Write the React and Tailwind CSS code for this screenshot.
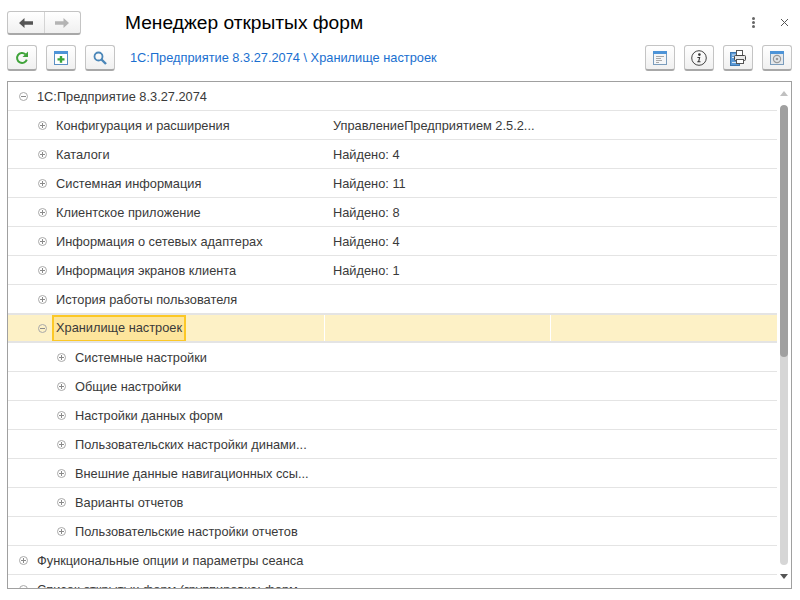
import React from 'react';

const rows = [
  { level: 0, name: '1С:Предприятие 8.3.27.2074', open: true },
  { level: 1, name: 'Конфигурация и расширения', value: 'УправлениеПредприятием 2.5.2...' },
  { level: 1, name: 'Каталоги', value: 'Найдено: 4' },
  { level: 1, name: 'Системная информация', value: 'Найдено: 11' },
  { level: 1, name: 'Клиентское приложение', value: 'Найдено: 8' },
  { level: 1, name: 'Информация о сетевых адаптерах', value: 'Найдено: 4' },
  { level: 1, name: 'Информация экранов клиента', value: 'Найдено: 1' },
  { level: 1, name: 'История работы пользователя' },
  { level: 1, name: 'Хранилище настроек', open: true, selected: true },
  { level: 2, name: 'Системные настройки' },
  { level: 2, name: 'Общие настройки' },
  { level: 2, name: 'Настройки данных форм' },
  { level: 2, name: 'Пользовательских настройки динами...' },
  { level: 2, name: 'Внешние данные навигационных ссы...' },
  { level: 2, name: 'Варианты отчетов' },
  { level: 2, name: 'Пользовательские настройки отчетов' },
  { level: 0, name: 'Функциональные опции и параметры сеанса' },
  { level: 0, name: 'Список открытых форм (группировка: форм', open: true },
];

const indent = ['pl-[11px]', 'pl-[30px]', 'pl-[49px]'];

const ToolButton = ({ children }) => (
  <button className="w-[30px] h-[26px] flex items-center justify-center rounded-[3px] border border-[#c4c4c4] border-b-2 border-b-[#a8a8a8] bg-gradient-to-b from-white to-[#f0f0f0]">
    {children}
  </button>
);

const TreeToggle = ({ open }) => (
  <svg width="9" height="9" viewBox="0 0 9 9" className="shrink-0 -mt-px">
    <circle cx="4.5" cy="4.5" r="4" fill="none" stroke="#a8a8a8" />
    <path d={open ? 'M2 4.5h5' : 'M2 4.5h5M4.5 2v5'} stroke="#8a8a8a" />
  </svg>
);

const Row = ({ row }) => (
  <div className={`flex h-[29px] shrink-0 border-b border-[#e4e4e4] text-[12.8px] text-[#3a3a3a] ${row.selected ? 'bg-[#fdf1c6] border-b-2 border-t-2 border-[#e2e2ea] h-[30px] -mt-px' : ''}`}>
    <div className={`w-[317px] shrink-0 flex items-center pt-px overflow-hidden whitespace-nowrap ${indent[row.level]} ${row.selected ? 'border-r border-white' : ''}`}>
      <TreeToggle open={row.open} />
      {row.selected ? (
        <span className="ml-[5px] h-[27px] w-[134px] -mt-px flex items-center pl-[2px] bg-[#fde59c] border-2 border-[#fcc826]">{row.name}</span>
      ) : (
        <span className="ml-[9px]">{row.name}</span>
      )}
    </div>
    <div className={`w-[226px] shrink-0 flex items-center pt-px pl-[8px] whitespace-nowrap ${row.selected ? 'border-r border-white' : ''}`}>{row.value}</div>
    <div className="flex-1" />
  </div>
);

export default function App() {
  return (
    <div className="w-[800px] h-[600px] bg-white flex flex-col overflow-hidden font-['Liberation_Sans',Arial,sans-serif]">
      {/* заголовок */}
      <div className="flex items-center h-[24px] mt-[11px] pl-[7px] pr-[11px] shrink-0">
        <div className="w-[74px] h-[24px] flex rounded-[3px] border border-[#c4c4c4] border-b-2 border-b-[#a8a8a8] bg-gradient-to-b from-white to-[#f0f0f0]">
          <div className="flex-1 flex items-center justify-center border-r border-[#d4d4d4]">
            <svg width="14" height="10" viewBox="0 0 14 10"><path d="M0 5 5.5 0v3.2H14v3.6H5.5V10z" fill="#555" /></svg>
          </div>
          <div className="flex-1 flex items-center justify-center">
            <svg width="14" height="10" viewBox="0 0 14 10"><path d="M14 5 8.5 0v3.2H0v3.6h8.5V10z" fill="#b4b4b4" /></svg>
          </div>
        </div>
        <div className="ml-[44px] text-[19.2px] text-black whitespace-nowrap">Менеджер открытых форм</div>
        <div className="ml-auto flex flex-col gap-[1px] mr-[25px] -mt-[2px]">
          <span className="w-[3px] h-[3px] bg-[#666] rounded-full" />
          <span className="w-[3px] h-[3px] bg-[#666] rounded-full" />
          <span className="w-[3px] h-[3px] bg-[#666] rounded-full" />
        </div>
        <svg width="9" height="9" viewBox="0 0 9 9" className="-mt-px"><path d="M1 1l7 7M8 1 1 8" stroke="#555" /></svg>
      </div>

      {/* панель кнопок */}
      <div className="flex items-center h-[26px] mt-[10px] pl-[7px] pr-[8px] shrink-0">
        <div className="flex gap-[9px]">
          <ToolButton>
            <svg width="14" height="14" viewBox="0 0 14 14" fill="none">
              <path d="M11.8 8.6A5 5 0 1 1 10.400 3.200" stroke="#3fa33a" strokeWidth="2" />
              <path d="M13 0.500v5.500H7.500z" fill="#3fa33a" />
            </svg>
          </ToolButton>
          <ToolButton>
            <svg width="14" height="14" viewBox="0 0 14 14">
              <rect x="0.5" y="0.5" width="13" height="13" fill="#fff" stroke="#5a8fc4" />
              <rect x="0" y="0" width="14" height="3" fill="#4d94d8" />
              <path d="M5.8 5h2.4v2.2h2.3v2.4H8.200v2.200H5.800V9.600H3.500V7.200h2.300z" fill="#3aa53a" />
            </svg>
          </ToolButton>
          <ToolButton>
            <svg width="14" height="14" viewBox="0 0 14 14" fill="none">
              <circle cx="5.500" cy="5.500" r="4" stroke="#4a86b8" strokeWidth="1.800" />
              <path d="M8.500 8.500 13 13" stroke="#4a86b8" strokeWidth="2.400" />
            </svg>
          </ToolButton>
        </div>
        <div className="ml-[15px] text-[12.8px] text-[#1a6fd0] whitespace-nowrap">1С:Предприятие 8.3.27.2074 \ Хранилище настроек</div>
        <div className="ml-auto flex gap-[9px]">
          <ToolButton>
            <svg width="14" height="14" viewBox="0 0 14 14">
              <rect x="0.500" y="0.500" width="13" height="13" fill="#f4f6f8" stroke="#7a9cbc" />
              <rect x="0" y="0" width="14" height="3" fill="#4d94d8" />
              <path d="M3 5.500h8M3 7.500h5M3 9.500h6M3 11.500h3" stroke="#a8a8a8" />
            </svg>
          </ToolButton>
          <ToolButton>
            <svg width="16" height="16" viewBox="0 0 16 16" fill="none">
              <circle cx="8" cy="8" r="7.300" stroke="#444" />
              <circle cx="8.400" cy="4.600" r="1.300" fill="#333" />
              <path d="M6.400 7h2.900l-1 4.200h1.200v1H6.300v-1h.9l.8-3.200H6.400z" fill="#333" />
            </svg>
          </ToolButton>
          <ToolButton>
            <svg width="16" height="16" viewBox="0 0 16 16">
              <rect x="0.500" y="2.500" width="9" height="13" fill="#5c9ad6" stroke="#3f78b0" />
              <path d="M2 5h5M2 7.500h3M2 12.500h5" stroke="#dbe9f6" />
              <rect x="6.500" y="0.500" width="6" height="5" fill="#fff" stroke="#555" />
              <rect x="4.500" y="5.500" width="11" height="5" rx="1" fill="#e8e8e8" stroke="#444" />
              <rect x="6.500" y="9.500" width="7" height="4" fill="#fff" stroke="#555" />
            </svg>
          </ToolButton>
          <ToolButton>
            <svg width="14" height="14" viewBox="0 0 14 14" fill="none">
              <rect x="0.500" y="0.500" width="13" height="13" fill="#e4e8ec" stroke="#7a9cbc" />
              <rect x="0" y="0" width="14" height="3" fill="#4d94d8" />
              <circle cx="7" cy="8" r="3.600" stroke="#999" strokeWidth="1.200" />
              <circle cx="7" cy="8" r="1.300" fill="#999" />
            </svg>
          </ToolButton>
        </div>
      </div>

      {/* дерево */}
      <div className="mt-[10px] ml-[7px] w-[785px] h-[508px] flex border border-[#a0a0a0] overflow-hidden shrink-0">
        <div className="w-[769px] shrink-0 flex flex-col">
          {rows.map((row) => (
            <Row key={row.name} row={row} />
          ))}
        </div>
        <div className="flex-1 flex flex-col items-center pt-[9px] pr-px">
          <div className="w-0 h-0 border-x-[4px] border-x-transparent border-b-[5px] border-b-[#c0c0c0]" />
          <div className="mt-[9px] w-[8px] h-[460px] rounded-[4px] bg-[#d6d6d6] overflow-hidden">
            <div className="h-[252px] bg-[#a0a0a0] rounded-[4px]" />
          </div>
          <div className="mt-[9px] w-0 h-0 border-x-[4px] border-x-transparent border-t-[5px] border-t-[#555]" />
        </div>
      </div>
    </div>
  );
}
